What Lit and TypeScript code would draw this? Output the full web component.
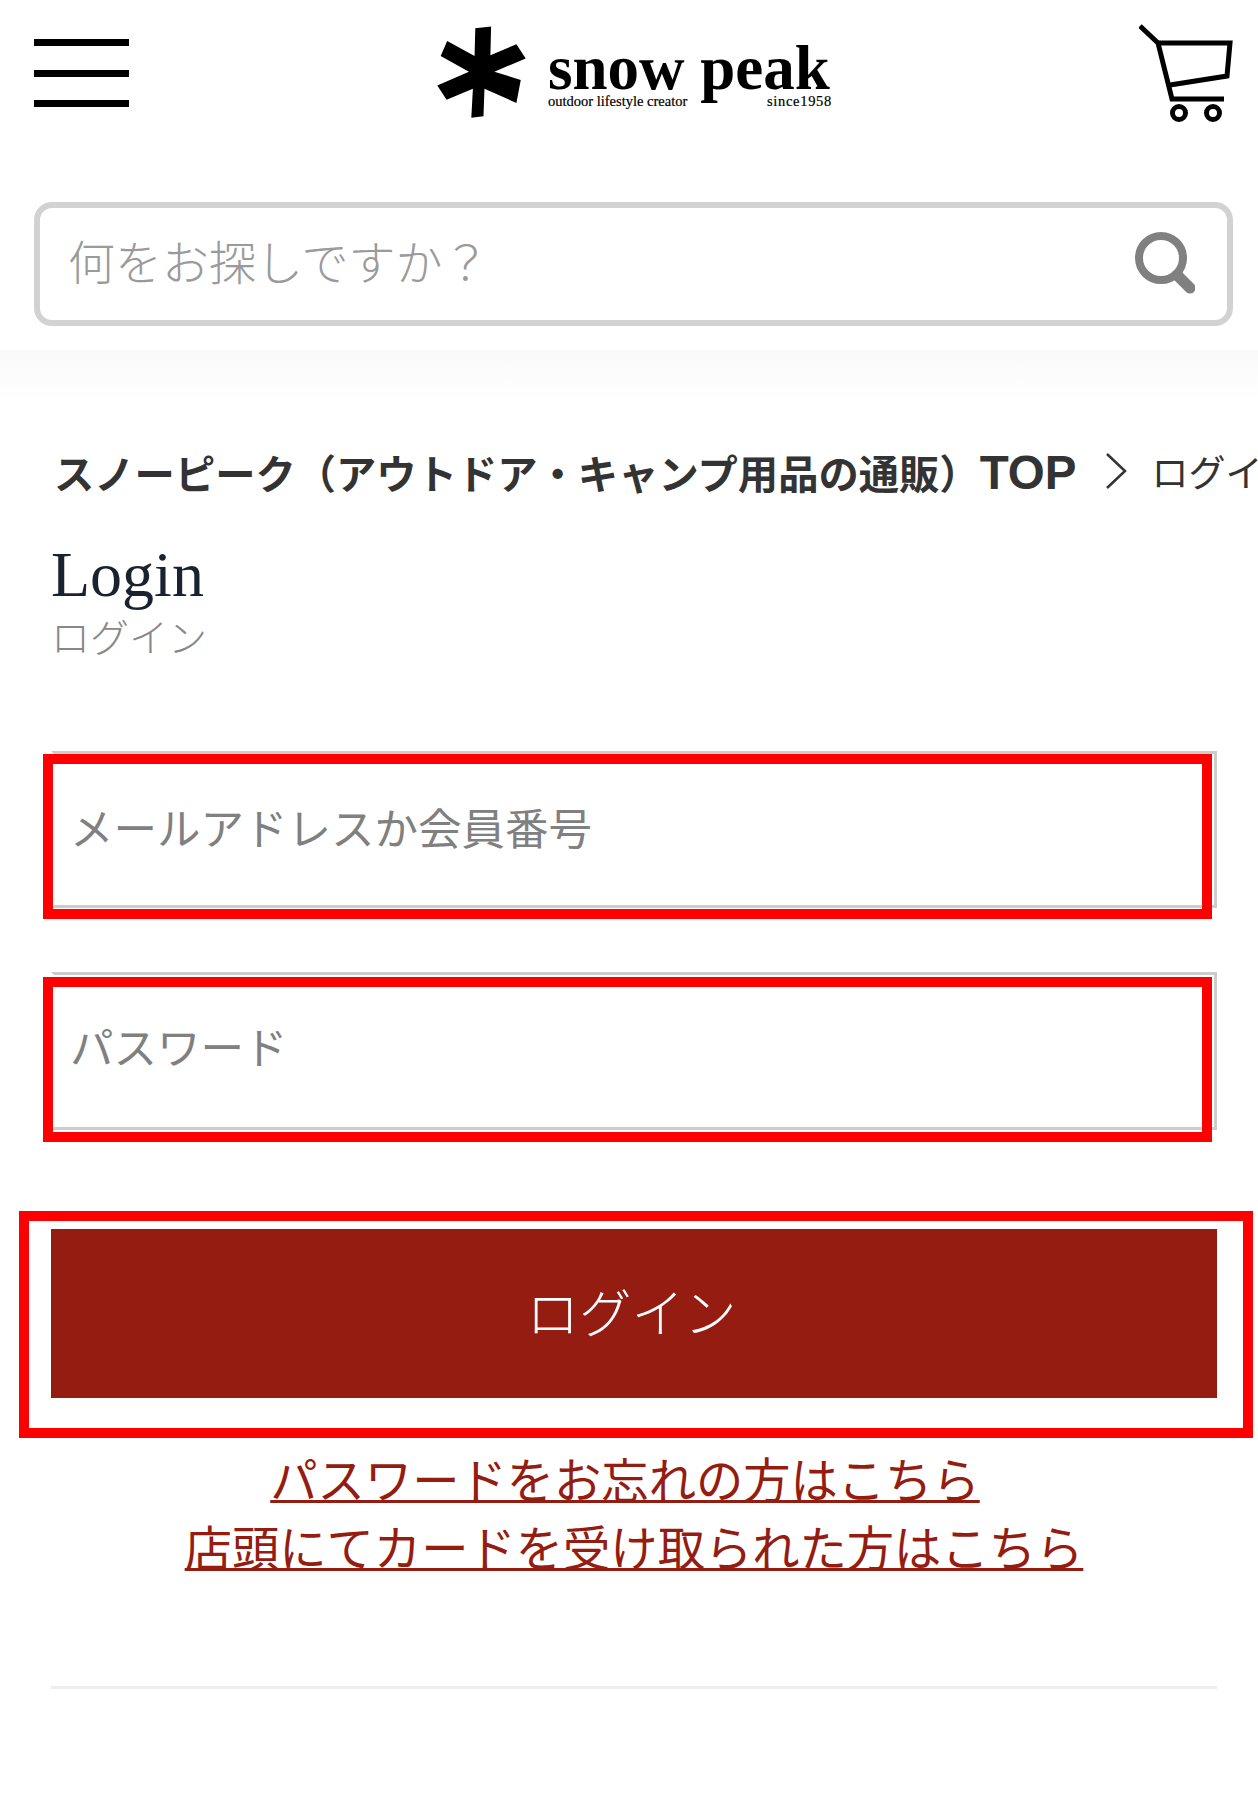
import { LitElement, html, css } from "lit";
import { customElement } from "lit/decorators.js";

@customElement("app-root")
export class AppRoot extends LitElement {
  static styles = css`
    :host { display: block; width: 1258px; height: 1818px; overflow: hidden; background: #fff;
      font-family: "Noto Sans CJK JP", "Liberation Sans", sans-serif; font-weight: 300; }
    header { height: 350px; box-sizing: border-box; padding: 0 25px 24px 34px; display: flex; flex-direction: column; justify-content: space-between; }
    .top { display: flex; align-items: flex-start; justify-content: space-between; height: 130px; }
    .burger { display: flex; flex-direction: column; gap: 23.5px; width: 95px; margin-top: 39px; }
    .burger span { display: block; height: 7px; background: #000; }
    .logo { display: flex; gap: 22px; margin-top: 26px; margin-left: 1px; }
    .logo-text { width: 284px; display: flex; flex-direction: column; color: #000; font-family: "Liberation Serif", serif; margin-top: 16px; }
    .wordmark { font-size: 63px; line-height: 52px; font-weight: 700; white-space: nowrap; }
    .tag { display: flex; justify-content: space-between; font-size: 14.5px; line-height: 14px; margin-top: 0; -webkit-text-stroke: 0.2px #000; }
    .tag span + span { letter-spacing: 0.7px; }
    .cart { margin-top: 22px; margin-right: -1px; }
    .search { height: 124px; box-sizing: border-box; border: 6px solid #d2d2d2; border-radius: 18px; display: flex; align-items: center; justify-content: space-between; padding: 0 32px 0 28px; color: #9a9a9a; font-size: 47px; }
    .search span { padding-bottom: 10px; }
    .band { height: 50px; background: linear-gradient(#f9f9f9, #fff); }
    .crumb { margin-top: 47px; padding-left: 54px; height: 48px; display: flex; align-items: center; white-space: nowrap; overflow: hidden; color: #333; }
    .crumb b { font-size: 40.3px; font-weight: 700; flex: none; }
    .crumb .en { font-family: "Liberation Sans", sans-serif; font-size: 47.5px; }
    .crumb svg { flex: none; margin: 0 24px 0 29px; }
    .crumb span.here { font-size: 37px; font-weight: 400; flex: none; color: #333; }
    main { padding: 0 41px 0 51px; }
    h1 { margin: 46px 0 0 0; font: 400 64px/68px "Liberation Serif", serif; color: #1a2230; }
    .sub { font-size: 39px; line-height: 46px; color: #888; margin-top: 3px; margin-bottom: 1px; }
    .field { position: relative; height: 157px; box-sizing: border-box; border: 3px solid #ccc; border-left-color: #fff; background: #fff; display: flex; align-items: center; padding: 0 0 7px 16px; font-size: 43.5px; font-weight: 400; color: #808080; }
    .field.one { margin-top: 93px; }
    .field.two { margin-top: 64px; height: 158px; padding-bottom: 12px; }
    .frame { position: absolute; box-sizing: border-box; border: 10px solid #f00; pointer-events: none; }
    .field .frame { left: -11px; right: 2px; top: 0; bottom: -14px; }
    .field.two .frame { top: 2px; bottom: -14.5px; }
    .button { position: relative; margin-top: 98.5px; height: 169.5px; padding: 0 5px 7px 0; box-sizing: border-box; background: #951c10; color: #fff; display: flex; align-items: center; justify-content: center; font-size: 52.5px; }
    .button .frame { left: -32px; right: -36px; top: -17.5px; bottom: -39.5px; }
    .links { margin-top: 46px; display: flex; flex-direction: column; align-items: center; font-size: 47.3px; font-weight: 400; line-height: 68px; color: #951c10; }
    .links a { color: inherit; text-decoration: underline; text-decoration-thickness: 3px; }
    .links a.first { margin-right: 18px; }
    hr { margin: 106px 0 0; border: 0; height: 3px; background: #eee; }
  `;

  render() {
    return html`
      <header>
        <div class="top">
          <div class="burger"><span></span><span></span><span></span></div>
          <div class="logo">
            <svg width="89" height="93" viewBox="-1 0 90 93">
              <path fill="#000" d="M37.7 1.7 L53.7 0 L53 29 L79.3 18 L88.7 32.3 L57 45.7 L83.7 54 L79.3 77.3 L47 63 L46 90.7 L33.7 92.3 L35.3 63 L8.7 74 L-0.7 59.7 L31.3 45.7 L2.7 29.7 L9.3 14.7 L37 29.7 Z"/>
            </svg>
            <div class="logo-text">
              <div class="wordmark">snow peak</div>
              <div class="tag"><span>outdoor lifestyle creator</span><span>since1958</span></div>
            </div>
          </div>
          <svg class="cart" width="95" height="100" viewBox="1140 22 95 100" fill="none" stroke="#000" stroke-width="5">
            <path d="M1141 26 L1159 43 L1173 99 L1225 99"/>
            <path d="M1159 43 L1231 43 L1228 76 L1171 85"/>
            <circle cx="1180" cy="113" r="6.5"/>
            <circle cx="1214" cy="113" r="6.5"/>
          </svg>
        </div>
        <div class="search">
          <span>何をお探しですか？</span>
          <svg width="60" height="64" viewBox="0 0 60 64" fill="none" stroke="#808080">
            <circle cx="26" cy="26" r="22" stroke-width="8"/>
            <path d="M42 43 L55 56" stroke-width="11" stroke-linecap="round"/>
          </svg>
        </div>
      </header>
      <div class="band"></div>
      <nav class="crumb">
        <b>スノーピーク（アウトドア・キャンプ用品の通販）<span class="en">TOP</span></b>
        <svg width="22" height="36" viewBox="0 0 22 36" fill="none" stroke="#333" stroke-width="2.5"><path d="M2 1 L20 18 L2 35"/></svg>
        <span class="here">ログイン</span>
      </nav>
      <main>
        <h1>Login</h1>
        <div class="sub">ログイン</div>
        <div class="field one">メールアドレスか会員番号<div class="frame"></div></div>
        <div class="field two">パスワード<div class="frame"></div></div>
        <div class="button">ログイン<div class="frame"></div></div>
        <div class="links">
          <a class="first" href="#">パスワードをお忘れの方はこちら</a>
          <a href="#">店頭にてカードを受け取られた方はこちら</a>
        </div>
        <hr />
      </main>
    `;
  }
}
